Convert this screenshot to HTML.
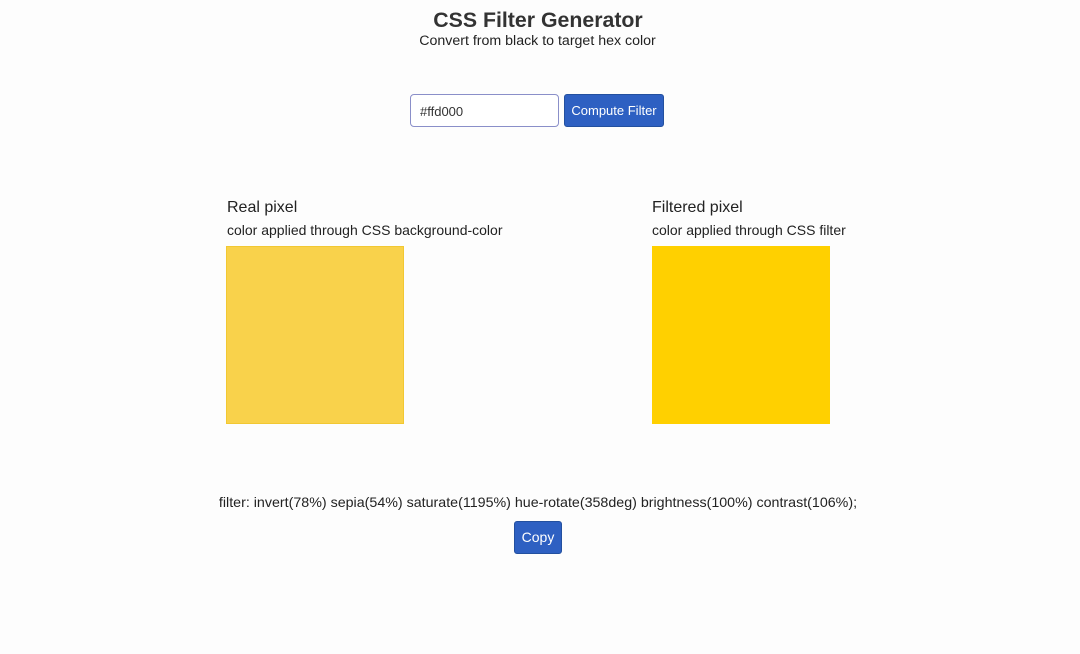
<!DOCTYPE html>
<html><head><style>
body{margin:0;width:1080px;height:654px;background:#fdfdfd;font-family:"Liberation Sans",sans-serif;color:#222;position:relative;overflow:hidden}
.a{position:absolute}
h1{position:absolute;top:8px;left:0;width:1076px;text-align:center;font-size:21.3px;margin:0;color:#333;font-weight:bold}
.sub{top:33px;left:0;width:1075px;text-align:center;font-size:14.2px;color:#222}
.inp{left:410px;top:94px;width:149px;height:33px;border:1px solid #8a8fc9;border-radius:4px;box-sizing:border-box;font-size:13px;padding:9px 9px;color:#333;background:#fff}
.btn{background:#2e60c2;color:#fff;border:1px solid #23509f;border-radius:3px;box-sizing:border-box;font-size:13px;text-align:center}
.t1{font-size:16px;color:#222}
.t2{font-size:14px;color:#222}
</style></head><body>
<h1>CSS Filter Generator</h1>
<div class="a sub">Convert from black to target hex color</div>
<div class="a inp">#ffd000</div>
<div class="a btn" style="left:564px;top:94px;width:100px;height:33px;line-height:31px">Compute Filter</div>
<div class="a t1" style="left:227px;top:199px">Real pixel</div>
<div class="a t2" style="left:227px;top:222px">color applied through CSS background-color</div>
<div class="a" style="left:226px;top:246px;width:178px;height:178px;background:#f9d24b;box-shadow:inset 0 0 0 1px #f2c832"></div>
<div class="a t1" style="left:652px;top:199px">Filtered pixel</div>
<div class="a t2" style="left:652px;top:222px">color applied through CSS filter</div>
<div class="a" style="left:652px;top:246px;width:178px;height:178px;background:#ffd000"></div>
<div class="a t2" style="left:0;width:1076px;text-align:center;top:495px;font-size:14.25px">filter: invert(78%) sepia(54%) saturate(1195%) hue-rotate(358deg) brightness(100%) contrast(106%);</div>
<div class="a btn" style="left:514px;top:521px;width:48px;height:33px;line-height:31px;font-size:14px">Copy</div>
</body></html>
